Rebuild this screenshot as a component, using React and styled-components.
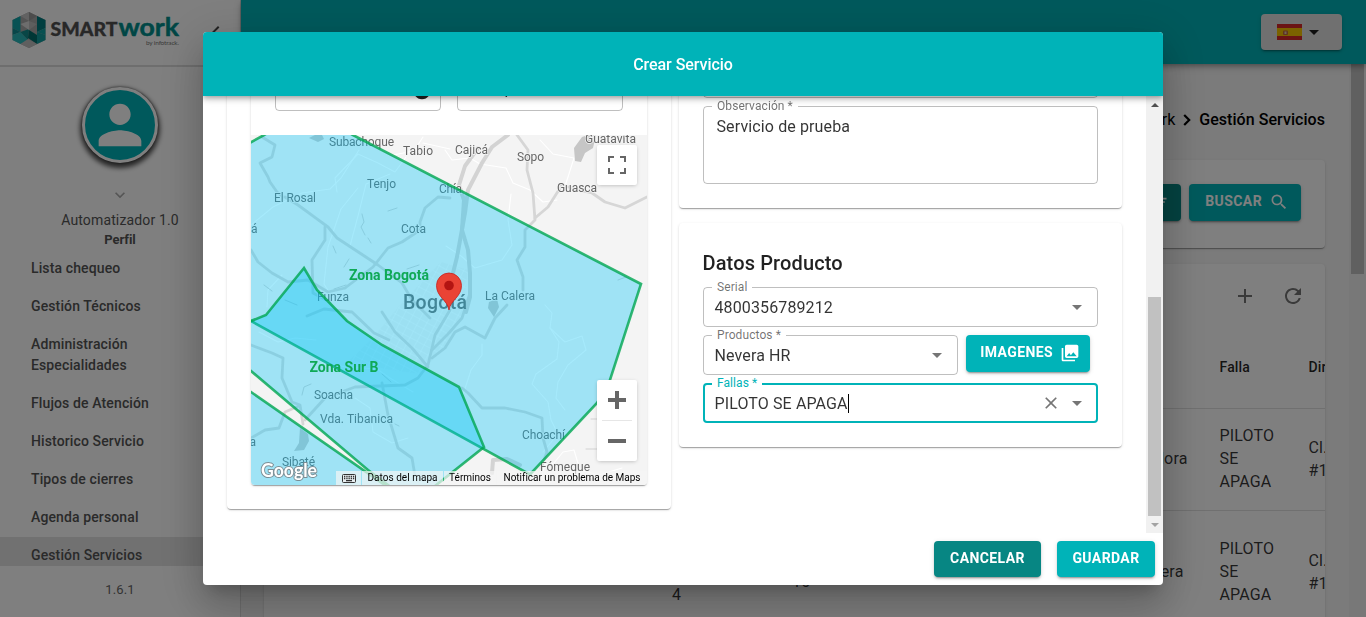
import React from "react";
import styled, { createGlobalStyle, css } from "styled-components";
import {
  MdPerson,
  MdSearch,
  MdAdd,
  MdRefresh,
  MdArrowDropDown,
  MdClose,
  MdCollections,
  MdInfo,
  MdKeyboardArrowDown,
  MdChevronLeft,
  MdClearAll,
} from "react-icons/md";

const teal = "#00b3b8";
const darkTeal = "#078683";
const elevation1 =
  "0 2px 1px -1px rgba(0,0,0,.2), 0 1px 1px 0 rgba(0,0,0,.14), 0 1px 3px 0 rgba(0,0,0,.12)";
const elevation2 =
  "0 3px 1px -2px rgba(0,0,0,.2), 0 2px 2px 0 rgba(0,0,0,.14), 0 1px 5px 0 rgba(0,0,0,.12)";
const elevation4 =
  "0 2px 4px -1px rgba(0,0,0,.2), 0 4px 5px 0 rgba(0,0,0,.14), 0 1px 10px 0 rgba(0,0,0,.12)";
const elevation24 =
  "0 11px 15px -7px rgba(0,0,0,.2), 0 24px 38px 3px rgba(0,0,0,.14), 0 9px 46px 8px rgba(0,0,0,.12)";

const GlobalStyle = createGlobalStyle`
  *, *::before, *::after { box-sizing: border-box; }
  body {
    margin: 0;
    overflow: hidden;
    font-family: Roboto, "Liberation Sans", sans-serif;
    color: rgba(0,0,0,.87);
  }
`;

/* ---------- page shell ---------- */

const Page = styled.div`
  display: flex;
  width: 1366px;
  height: 617px;
  overflow: hidden;
  background: #f6f6f6;
`;

const Sidebar = styled.aside`
  display: flex;
  flex-direction: column;
  align-items: center;
  flex: none;
  width: 241px;
  background: #fff;
  border-right: 1px solid #dcdcdc;
`;

const Brand = styled.div`
  display: flex;
  justify-content: space-between;
  align-items: center;
  align-self: stretch;
  height: 67px;
  padding: 0 12px 6px 8px;
  border-bottom: 2px solid #dcdcdc;
  > svg:last-child {
    margin-top: 5px;
  }
`;

const Avatar = styled.div`
  display: flex;
  align-items: center;
  justify-content: center;
  width: 76px;
  height: 76px;
  margin-top: 20px;
  border: 3px solid #fff;
  border-radius: 50%;
  background: ${teal};
  color: #fff;
  box-shadow: 0 3px 5px 2px rgba(0, 0, 0, 0.7), 0 0 2px rgba(0, 0, 0, 0.6);
`;

const Expand = styled.div`
  display: flex;
  margin-top: 22px;
  color: #aaa;
`;

const UserName = styled.div`
  margin-top: 4px;
  font-size: 14px;
  line-height: 22px;
  letter-spacing: 0.14px;
  color: #555;
`;

const UserRole = styled.div`
  height: 19px;
  font-size: 13px;
  font-weight: 700;
  line-height: 17px;
  letter-spacing: -0.05px;
  color: #545454;
`;

const Nav = styled.nav`
  align-self: stretch;
  height: 316px;
  overflow: hidden;
`;

const NavItem = styled.div`
  padding: 8px 70px 9px 31px;
  font-size: 14px;
  font-weight: 500;
  line-height: 21px;
  letter-spacing: 0.12px;
  color: #545454;
  background: ${(p) => (p.$active ? "#e3e3e3" : "transparent")};
`;

const Version = styled.div`
  margin-top: 15px;
  font-size: 13px;
  line-height: 17px;
  letter-spacing: 0.1px;
  color: #666;
`;

const Main = styled.div`
  display: flex;
  flex-direction: column;
  flex: 1;
  min-width: 0;
`;

const TopBar = styled.header`
  display: flex;
  justify-content: flex-end;
  align-items: center;
  flex: none;
  height: 64px;
  padding-right: 24px;
  background: ${teal};
  box-shadow: ${elevation4};
  z-index: 1;
`;

const LanguageButton = styled.button`
  display: flex;
  align-items: center;
  width: 81px;
  height: 36px;
  padding: 0 0 0 16px;
  border: 0;
  border-radius: 4px;
  background: #e0e0e0;
  color: rgba(0, 0, 0, 0.87);
  box-shadow: ${elevation2};
`;

const Scroller = styled.div`
  display: flex;
  flex: 1;
  min-height: 0;
`;

const Content = styled.main`
  display: flex;
  flex-direction: column;
  flex: 1;
  min-width: 0;
  padding: 0 24px 0 23px;
  overflow: hidden;
`;

const PageTrack = styled.div`
  width: 17px;
  padding: 0 2px;
  background: #f1f1f1;
`;

const PageThumb = styled.div`
  height: 210px;
  background: #c1c1c1;
`;

const Breadcrumb = styled.div`
  display: flex;
  align-items: center;
  justify-content: flex-end;
  flex: none;
  height: 96px;
  padding-top: 14px;
  font-size: 16px;
  color: #000;
  svg {
    margin: 2px 8px 0;
  }
  strong {
    font-weight: 500;
    letter-spacing: 0.05px;
  }
`;

const Panel = styled.section`
  flex: none;
  border-radius: 4px;
  background: #fff;
  box-shadow: ${elevation1};
`;

const FilterPanel = styled(Panel)`
  display: flex;
  justify-content: flex-end;
  gap: 8px;
  height: 88px;
  padding: 24px;
  margin-bottom: 16px;
`;

const TablePanel = styled(Panel)`
  overflow: hidden;
  height: 500px;
`;

const TableTools = styled.div`
  display: flex;
  justify-content: flex-end;
  align-items: center;
  height: 64px;
  padding: 0 20px 0 0;
  gap: 24px;
  color: #757575;
`;

const TableRow = styled.div`
  display: grid;
  grid-template-columns: 392px 120px 300px 127.5px 89px 100px;
  align-items: center;
  height: ${(p) => p.$height}px;
  padding-bottom: ${(p) => p.$lift || 0}px;
  border-bottom: 1px solid #e0e0e0;
  font-size: ${(p) => (p.$head ? 14 : 16)}px;
  font-weight: ${(p) => (p.$head ? 500 : 400)};
  line-height: 23px;
  letter-spacing: 0.15px;
  color: rgba(0, 0, 0, ${(p) => (p.$head ? 0.87 : 0.8)});
`;

const Cell = styled.div`
  padding-left: 16px;
  padding-top: ${(p) => p.$down || 0}px;
  padding-right: ${(p) => p.$end || 0}px;
  text-align: ${(p) => (p.$end ? "right" : "left")};
`;

/* ---------- shared controls ---------- */

const Button = styled.button`
  display: flex;
  align-items: center;
  justify-content: center;
  flex: none;
  width: ${(p) => p.$width}px;
  height: ${(p) => p.$height || 36}px;
  padding: 0 0 2px;
  border: 0;
  border-radius: 4px;
  font-family: inherit;
  font-size: 14px;
  font-weight: 700;
  letter-spacing: 0.4px;
  color: #fff;
  background: ${(p) => (p.$dark ? darkTeal : teal)};
  box-shadow: ${elevation2};
  ${(p) =>
    p.$withIcon &&
    css`
      justify-content: flex-end;
      gap: 7px;
      padding: 0 ${p.$end || 12}px 3px 0;
      svg {
        margin-top: 2px;
      }
    `}
`;

/* ---------- dialog ---------- */

const Backdrop = styled.div`
  position: fixed;
  inset: 0;
  z-index: 10;
  display: flex;
  align-items: center;
  justify-content: center;
  background: rgba(0, 0, 0, 0.5);
`;

const Dialog = styled.div`
  display: flex;
  flex-direction: column;
  width: 960px;
  height: 553px;
  border-radius: 4px;
  overflow: hidden;
  background: #fff;
  box-shadow: ${elevation24};
`;

const DialogHeader = styled.header`
  display: flex;
  align-items: center;
  justify-content: center;
  flex: none;
  height: 64px;
  z-index: 2;
  background: ${teal};
  color: #fff;
  font-size: 16px;
  font-weight: 500;
  letter-spacing: -0.05px;
  box-shadow: ${elevation4};
`;

const DialogBody = styled.div`
  display: flex;
  height: 437px;
  overflow: hidden;
`;

const Columns = styled.div`
  display: grid;
  grid-template-columns: 444px 443px;
  gap: 8px;
  align-items: start;
  flex: 1;
  margin-top: -62px;
  padding-left: 24px;
`;

const Stack = styled.div`
  display: flex;
  flex-direction: column;
  gap: 15px;
`;

const Card = styled.section`
  display: flex;
  flex-direction: column;
  gap: 8px;
  padding: 24px;
  border-radius: 4px;
  background: #fff;
  box-shadow: ${elevation1};
`;

const AddressCard = styled.div`
  border-radius: 4px;
  overflow: hidden;
  box-shadow: ${elevation1};
`;

const AddressFields = styled.div`
  display: grid;
  grid-template-columns: 166px 166px;
  gap: 16px;
  height: 77px;
  padding: 13px 24px 0;
`;

const AddressCardWrap = styled(Card)`
  height: 475px;
`;

const SectionTitle = styled.h2`
  margin: 0;
  font-size: 20px;
  font-weight: 500;
  line-height: 32px;
  letter-spacing: 0.13px;
  text-indent: -0.5px;
`;

const FieldBox = styled.div`
  position: relative;
  display: flex;
  align-items: center;
  width: ${(p) => (p.$width ? p.$width + "px" : "auto")};
  height: ${(p) => p.$height || 40}px;
  padding: 0 8px 0 10.5px;
  border: 1px solid rgba(0, 0, 0, 0.25);
  border-radius: 4px;
  font-size: 16px;
  letter-spacing: 0.12px;
  color: rgba(0, 0, 0, 0.8);
  ${(p) =>
    p.$multiline &&
    css`
      align-items: flex-start;
      padding: 10px 12.5px;
      line-height: 19px;
    `}
  ${(p) =>
    p.$focused &&
    css`
      border: 2px solid ${teal};
      padding: 0 7px 0 9.5px;
    `}
`;

const FieldLabel = styled.label`
  position: absolute;
  top: ${(p) => (p.$focused ? -9 : -8)}px;
  left: ${(p) => (p.$focused ? 7 : 8)}px;
  padding: 0 5px;
  background: #fff;
  font-size: 12px;
  line-height: 14px;
  letter-spacing: 0.08px;
  color: ${(p) => (p.$focused ? teal : "rgba(0,0,0,.56)")};
`;

const FieldValue = styled.span`
  flex: 1;
  padding-bottom: ${(p) => p.$lift || 0}px;
`;

const Caret = styled.span`
  display: inline-block;
  width: 1px;
  height: 19px;
  vertical-align: -4px;
  background: #000;
`;

const FieldIcon = styled.span`
  display: flex;
  margin-left: ${(p) => p.$gap || 0}px;
  color: ${(p) => (p.$strong ? "#222" : "#757575")};
`;

const FieldRow = styled.div`
  display: flex;
  align-items: flex-start;
  gap: 8px;
`;

const DialogTrack = styled.div`
  display: flex;
  flex-direction: column;
  align-items: center;
  flex: none;
  width: 17px;
  background: #f1f1f1;
`;

const TrackArrow = styled.div`
  display: flex;
  align-items: center;
  justify-content: center;
  height: 17px;
  svg {
    display: block;
  }
`;

const TrackThumb = styled.div`
  width: 13px;
  height: 219px;
  margin-top: auto;
  background: #c1c1c1;
`;

const DialogFooter = styled.footer`
  display: flex;
  justify-content: flex-end;
  gap: 16px;
  padding: 8px;
`;

/* ---------- map ---------- */

const MapFrame = styled.div`
  position: relative;
  width: 396px;
  height: 350px;
  overflow: hidden;
  background: #f5f5f5;
  > svg {
    display: block;
  }
`;

const MapControl = styled.div`
  position: absolute;
  right: 10px;
  top: ${(p) => p.$top}px;
  display: flex;
  flex-direction: column;
  align-items: center;
  width: 40px;
  border-radius: 2px;
  background: #fff;
  box-shadow: 0 1px 4px -1px rgba(0, 0, 0, 0.3);
`;

const MapButton = styled.div`
  display: flex;
  align-items: center;
  justify-content: center;
  width: 40px;
  height: 40px;
`;

const ControlDivider = styled.div`
  width: 30px;
  height: 1px;
  background: #e6e6e6;
`;

const Attribution = styled.div`
  position: absolute;
  right: 0;
  bottom: 0;
  display: flex;
  gap: 1px;
  height: 14px;
  font-size: 10px;
  line-height: 14px;
  color: #000;
`;

const Credit = styled.span`
  display: flex;
  align-items: center;
  justify-content: center;
  width: ${(p) => p.$width}px;
  white-space: nowrap;
  letter-spacing: ${(p) => p.$spacing || 0}px;
  background: rgba(245, 245, 245, 0.7);
`;

const roads = [
  "M262 137L275 145L272 157L260 163L268 177L270 182L277 192L283 197",
  "M285 197L298 205L328 227L337 238L378 265L402 283L412 300L430 318",
  "M325 227L325 240L312 260L313 293L330 302",
  "M251 250L258 262L272 273L288 282L308 280L328 292L345 288",
  "M450 198L438 197L425 208L420 222L420 230L402 242L388 248L373 267L345 288",
  "M517 135L528 150L527 170L533 193L535 220L525 230L525 247L517 260L523 277L523 290",
  "M535 218L548 207L562 185L578 190L592 193L605 202L625 208L647 197",
  "M507 305L495 318L485 338L465 327L455 332L445 348L432 358",
  "M462 388L468 393L482 408L505 408L525 412L542 418L543 438L547 452L541 468",
  "M450 310L435 335L428 365L418 378L405 385L355 387L325 398L305 420",
  "M251 345L272 353L283 358L282 378L292 402L300 405L303 424",
  "M382 383L388 415L398 448L412 458L415 476",
  "M251 438L265 430L279 428L285 412L299 406",
  "M382 312L395 332L412 348L428 367",
  "M307 316L324 309L352 312L374 333L389 340",
  "M470 293L462 318L448 334L432 350",
];

const wideRoads = [
  "M508 135L492 147L482 163L468 190L465 213L457 257L453 273",
  "M464 200L462 230L468 250L470 273L470 297L466 312",
  "M478 148L465 166L459 185L464 200",
  "M492 473L493 460L507 459L520 465",
];

const faintRoads = [
  "M359 150L341 178L330 189L302 193L273 207L251 225",
  "M337 192L335 178L358 154L378 163L395 172L406 157",
  "M358 188L341 209L328 247L324 284L334 300",
  "M390 174L366 184L358 216L350 246",
  "M445 150L452 160L470 158L480 164L506 168L513 183L530 190L543 202L557 200",
  "M446 246L461 256L475 268L502 260L512 245L508 220L511 194",
  "M540 140L553 154L574 158L568 177L565 186",
  "M545 305L552 313L550 328L559 342L557 359L536 374L532 384L548 402L551 420L558 434L543 452",
  "M550 328L565 342L582 336L586 350L568 365L558 382L556 398L565 410",
  "M463 395L471 370L482 355L482 344",
  "M267 307L268 290L282 275M259 332L278 342L295 338L316 340",
  "M541 477L545 465L554 463L563 452L574 450L580 470L599 475L622 468",
  "M321 362L346 367L377 369L390 378L413 392",
  "M355 398L370 408L373 432L392 443L408 438",
  "M423 137L414 151L393 155M423 143L450 149",
];

const labels = [
  ["Subachoque", 329, 146, 65],
  ["Tabio", 403, 155, 30],
  ["Cajicá", 455, 154, 33],
  ["Sopo", 517, 161, 27],
  ["Guatavita", 585, 142.5, 51],
  ["Guasca", 557, 192, 40],
  ["Tenjo", 367, 188, 29],
  ["El Rosal", 274, 202, 42],
  ["Chía", 439, 193, 23],
  ["á", 251, 233, 6],
  ["Cota", 401, 233, 25],
  ["Funza", 317, 301, 32],
  ["La Calera", 485, 300, 50],
  ["Soacha", 314, 399, 39],
  ["Vda. Tibanica", 320, 423, 73],
  ["a", 249.5, 446, 6],
  ["Sibaté", 282, 466, 33],
  ["Choachí", 522, 439, 43],
  ["Fómeque", 540, 471, 50],
];

const zone = {
  fill: "#00c2f5",
  fillOpacity: 0.35,
  stroke: "#00a651",
  strokeOpacity: 0.8,
  strokeWidth: 2.6,
};

function ServiceMap() {
  return (
    <MapFrame>
      <svg width="396" height="350" viewBox="251 135 396 350">
        <defs>
          <pattern id="streets" width="8" height="7" patternUnits="userSpaceOnUse" patternTransform="rotate(28)">
            <path d="M0 0H8M0 0V7" stroke="#fff" strokeWidth="1" fill="none" opacity=".75" />
          </pattern>
        </defs>
        <rect x="251" y="135" width="396" height="350" fill="#f4f4f4" />
        <path d="M441 262L468 270L463 312L446 345L420 374L385 369L350 360L373 338L402 303Z" fill="#f0f0f0" />
        <path d="M441 262L468 270L463 312L446 345L420 374L385 369L350 360L373 338L402 303Z" fill="url(#streets)" />
        <g fill="none" strokeLinejoin="round" strokeLinecap="round">
          {faintRoads.map((d) => (
            <path key={d} d={d} stroke="#fff" strokeWidth="1.1" />
          ))}
          {roads.map((d) => (
            <path key={d} d={d} stroke="#d6d6d6" strokeWidth="2.8" />
          ))}
          {wideRoads.map((d) => (
            <path key={d} d={d} stroke="#d3d3d3" strokeWidth="4" />
          ))}
          <path
            d="M362 214l2 8l-3 5l4 8M368 238l3 5M388 211l9 -3M349 259l-5 8M407 269l12-4M264 285l8 6M333 246l3 7M285 300l12 5M334 289l12-4M311 384l-7 3l-2 8M382 374l9 8M395 424l4 2M618 280l8-3M591 419h10M586 449h12"
            stroke="#d2d2d2"
            strokeWidth="1"
          />
        </g>
        <g fill="#c6c6c6">
          <path d="M582 137L588 135H596L593 148L585 153L581 162L575 161L574 148Z" />
          <path d="M300 428L308 434L309 441L304 450L294 451L299 443Z" />
          <path d="M489 302L497 299L499 307L494 317L488 308Z" />
          <path d="M309 138l6-3h7l2 4l-6 3z" />
        </g>
        <g fill="#666" fontFamily="Roboto, sans-serif" fontSize="12">
          {labels.map(([text, x, y, width]) => (
            <text key={text} x={x} y={y} textLength={width} stroke="#f5f5f5" strokeWidth="1.5" paintOrder="stroke">
              {text}
            </text>
          ))}
          <text x="403" y="309" fontSize="19.5" fontWeight="500" textLength="64">
            Bogotá
          </text>
        </g>
        <path {...zone} d="M230 154L264 135L290 120L325 120L353 135L641 284L609 383L597 403L530 474.5L251 321L230 309Z" />
        <path {...zone} d="M230 329L251 321L266 315L304 268L317 290L347 321L382 345L459 387L484 447L430 490L392 488L368 470L251 371L230 353Z" />
        <path {...zone} d="M230 377L251 392L392 490L230 510Z" />
        <g fill="#0fa957" fontFamily="Roboto, sans-serif" fontSize="14" fontWeight="700">
          <text x="349" y="280" textLength="80">
            Zona Bogotá
          </text>
          <text x="309.500" y="372" textLength="69">
            Zona Sur B
          </text>
        </g>
        <path
          d="M449 310C447.500 300 436.500 297 436.500 285.500A12.500 12.500 0 0 1 461.500 285.500C461.500 297 450.500 300 449 310Z"
          fill="#ea4335"
          stroke="#c5221f"
          strokeWidth=".8"
        />
        <circle cx="449" cy="285.500" r="4.800" fill="#b31412" />
        <text
          x="261"
          y="477"
          textLength="56"
          lengthAdjust="spacingAndGlyphs"
          fontFamily="Lato, sans-serif"
          fontSize="19"
          fontWeight="700"
          fill="#fff"
          stroke="#7b8d94"
          strokeWidth="2"
          paintOrder="stroke"
        >
          Google
        </text>
      </svg>
      <MapControl $top={10}>
        <MapButton>
          <svg width="18" height="18" viewBox="0 0 18 18">
            <path
              d="M0 0v6h2V2h4V0H0zm16 0h-4v2h4v4h2V0h-2zm0 16h-4v2h6v-6h-2v4zM2 12H0v6h6v-2H2v-4z"
              fill="#666"
            />
          </svg>
        </MapButton>
      </MapControl>
      <MapControl $top={245}>
        <MapButton>
          <svg width="18" height="18" viewBox="0 0 18 18">
            <path d="M18 7h-7V0H7v7H0v4h7v7h4v-7h7z" fill="#666" />
          </svg>
        </MapButton>
        <ControlDivider />
        <MapButton>
          <svg width="18" height="18" viewBox="0 0 18 18">
            <path d="M0 7h18v4H0V7z" fill="#666" />
          </svg>
        </MapButton>
      </MapControl>
      <Attribution>
        <Credit $width={25}>
          <svg width="14" height="9" viewBox="0 0 14 9">
            <rect x=".5" y=".5" width="13" height="8" rx="1" fill="#e8eef0" stroke="#333" />
            <path
              d="M2 2.500h1.300M4.300 2.500h1.300M6.500 2.500h1.300M8.700 2.500h1.300M10.900 2.500h1.300M2 4.500h1.300M4.300 4.500h1.300M6.500 4.500h1.300M8.700 4.500h1.300M10.900 4.500h1.300M4 6.700h6"
              stroke="#333"
              strokeWidth="1.300"
            />
          </svg>
        </Credit>
        <Credit $width={81} $spacing={0.03}>
          Datos del mapa
        </Credit>
        <Credit $width={52}>Términos</Credit>
        <Credit $width={150} $spacing={-0.02}>
          Notificar un problema de Maps
        </Credit>
      </Attribution>
    </MapFrame>
  );
}

function Logo() {
  return (
    <svg width="176" height="44" viewBox="8 9 176 44">
      <path d="M29 13L45.500 21V41L29 49L12.500 41V21Z" fill="#a8a8a8" />
      <path d="M12.500 21L20.500 17V33L12.500 29Z" fill="#11a5a8" />
      <path d="M12.500 29L20.500 33L12.500 36Z" fill="#0f8d92" />
      <path d="M12.500 36L20.500 33L28 41L20.500 45L12.500 41Z" fill="#29b9bb" />
      <path d="M20.500 33L29 30L28 41Z" fill="#108d8d" />
      <path d="M37 17L45.500 21V29L37 33Z" fill="#007d80" />
      <path d="M45.500 29V36L37 33Z" fill="#0ea0a2" />
      <path d="M29 31L37 36V45L28 39Z" fill="#006f6d" />
      <path d="M37 33L45.500 36V41L37 45Z" fill="#119d9f" />
      <path d="M20.500 17L29 13V22Z" fill="#c4c4c4" />
      <path d="M29 13L37 17L29 22Z" fill="#999" />
      <path d="M20.500 25L29 22V31Z" fill="#dadada" />
      <path d="M29 22L37 25L29 31Z" fill="#bcbcbc" />
      <path d="M20.500 45L28 40L37 45L29 49Z" fill="#bebebe" />
      <text
        x="50.500"
        y="37"
        fontFamily="Lato, sans-serif"
        fontWeight="900"
        fontSize="18.500"
        fill="#505050"
        stroke="#505050"
        strokeWidth=".3"
        textLength="67"
        lengthAdjust="spacingAndGlyphs"
      >
        SMART
      </text>
      <text
        x="118.500"
        y="37"
        fontFamily="Lato, sans-serif"
        fontWeight="700"
        fontSize="25"
        fill="#008f8d"
        stroke="#008f8d"
        strokeWidth=".5"
        textLength="60.500"
        lengthAdjust="spacingAndGlyphs"
      >
        work
      </text>
      <text x="146" y="45.500" fontFamily="Lato, sans-serif" fontSize="6.500" fill="#777" textLength="33">
        by infotrack.
      </text>
    </svg>
  );
}

function SpainFlag() {
  return (
    <svg width="25" height="16" viewBox="0 0 25 16">
      <rect width="25" height="16" fill="#d62828" />
      <rect y="4" width="25" height="8" fill="#f7c400" />
      <rect x="6" y="6.500" width="5" height="4.500" rx="1" fill="#c06a3c" />
      <rect x="7.500" y="7.500" width="2" height="2.500" fill="#e6c6a8" />
    </svg>
  );
}

function CrumbArrow() {
  return (
    <svg width="8" height="12" viewBox="0 0 8 12" fill="none">
      <path d="M1.200 1L6.200 6L1.200 11" stroke="#000" strokeWidth="2.200" />
    </svg>
  );
}

function Field({ label, value, focused, clearable, multiline, height, width, info, lift, select = true }) {
  return (
    <FieldBox $focused={focused} $multiline={multiline} $height={height} $width={width}>
      {label && <FieldLabel $focused={focused}>{label}</FieldLabel>}
      <FieldValue $lift={lift}>
        {value}
        {focused && <Caret />}
      </FieldValue>
      {info && (
        <FieldIcon $strong>
          <MdInfo size={20} />
        </FieldIcon>
      )}
      {clearable && (
        <FieldIcon>
          <MdClose size={20} />
        </FieldIcon>
      )}
      {select && (
        <FieldIcon $gap={4}>
          <MdArrowDropDown size={24} />
        </FieldIcon>
      )}
    </FieldBox>
  );
}

const navItems = [
  "Lista chequeo",
  "Gestión Técnicos",
  "Administración Especialidades",
  "Flujos de Atención",
  "Historico Servicio",
  "Tipos de cierres",
  "Agenda personal",
  "Gestión Servicios",
];

function Fault() {
  return (
    <>
      PILOTO
      <br />
      SE
      <br />
      APAGA
    </>
  );
}

function Address() {
  return (
    <>
      Cl.
      <br />
      #1
    </>
  );
}

export default function App() {
  return (
    <>
      <GlobalStyle />
      <Page>
        <Sidebar>
          <Brand>
            <Logo />
            <MdChevronLeft size={24} color="#444" />
          </Brand>
          <Avatar>
            <MdPerson size={64} />
          </Avatar>
          <Expand>
            <MdKeyboardArrowDown size={20} />
          </Expand>
          <UserName>Automatizador 1.0</UserName>
          <UserRole>Perfil</UserRole>
          <Nav>
            {navItems.map((item) => (
              <NavItem key={item} $active={item === "Gestión Servicios"}>
                {item}
              </NavItem>
            ))}
          </Nav>
          <Version>1.6.1</Version>
        </Sidebar>
        <Main>
          <TopBar>
            <LanguageButton>
              <SpainFlag />
              <MdArrowDropDown size={24} />
            </LanguageButton>
          </TopBar>
          <Scroller>
            <Content>
              <Breadcrumb>
                <span>Smartwork</span>
                <CrumbArrow />
                <strong>Gestión Servicios</strong>
              </Breadcrumb>
              <FilterPanel>
                <Button $width={118} $height={37} $dark $withIcon>
                  LIMPIAR <MdClearAll size={20} />
                </Button>
                <Button $width={112} $height={37} $withIcon>
                  BUSCAR <MdSearch size={20} />
                </Button>
              </FilterPanel>
              <TablePanel>
                <TableTools>
                  <MdAdd size={24} />
                  <MdRefresh size={24} />
                </TableTools>
                <TableRow $height={81} $lift={2} $head>
                  <Cell />
                  <Cell />
                  <Cell />
                  <Cell />
                  <Cell>Falla</Cell>
                  <Cell>Dir</Cell>
                </TableRow>
                <TableRow $height={102} $lift={2}>
                  <Cell />
                  <Cell />
                  <Cell />
                  <Cell $end={16}>Lavadora</Cell>
                  <Cell>
                    <Fault />
                  </Cell>
                  <Cell>
                    <Address />
                  </Cell>
                </TableRow>
                <TableRow $height={122}>
                  <Cell />
                  <Cell $down={46}>4</Cell>
                  <Cell $down={20}>10</Cell>
                  <Cell $end={20}>Nevera</Cell>
                  <Cell>
                    <Fault />
                  </Cell>
                  <Cell>
                    <Address />
                  </Cell>
                </TableRow>
              </TablePanel>
            </Content>
            <PageTrack>
              <PageThumb />
            </PageTrack>
          </Scroller>
        </Main>
      </Page>

      <Backdrop>
        <Dialog>
          <DialogHeader>Crear Servicio</DialogHeader>
          <DialogBody>
            <Columns>
              <AddressCardWrap>
                <AddressCard>
                  <AddressFields>
                    <Field info select={false} />
                    <Field value="Lote prueba" lift={5} select={false} />
                  </AddressFields>
                  <ServiceMap />
                </AddressCard>
              </AddressCardWrap>
              <Stack>
                <Card>
                  <Field select={false} />
                  <Field label="Observación *" value="Servicio de prueba" height={78} multiline select={false} />
                </Card>
                <Card>
                  <SectionTitle>Datos Producto</SectionTitle>
                  <Field label="Serial" value="4800356789212" />
                  <FieldRow>
                    <Field label="Productos *" value="Nevera HR" width={255} />
                    <Button $width={124} $height={37} $withIcon $end={10}>
                      IMAGENES <MdCollections size={20} />
                    </Button>
                  </FieldRow>
                  <Field label="Fallas *" value="PILOTO SE APAGA" focused clearable />
                </Card>
              </Stack>
            </Columns>
            <DialogTrack>
              <TrackArrow>
                <svg width="8" height="4" viewBox="0 0 8 4">
                  <path d="M0 4L4 0L8 4Z" fill="#505050" />
                </svg>
              </TrackArrow>
              <TrackThumb />
              <TrackArrow>
                <svg width="8" height="4" viewBox="0 0 8 4">
                  <path d="M0 0L4 4L8 0Z" fill="#a3a3a3" />
                </svg>
              </TrackArrow>
            </DialogTrack>
          </DialogBody>
          <DialogFooter>
            <Button $width={107} $dark>
              CANCELAR
            </Button>
            <Button $width={98}>GUARDAR</Button>
          </DialogFooter>
        </Dialog>
      </Backdrop>
    </>
  );
}
